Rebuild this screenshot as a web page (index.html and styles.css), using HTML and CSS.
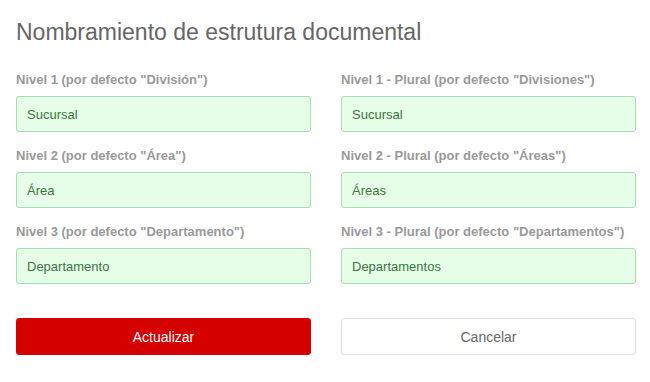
FILE: index.html
```html
<!DOCTYPE html>
<html lang="es">
<head>
  <meta charset="utf-8">
  <title>Nombramiento de estrutura documental</title>
  <link rel="stylesheet" href="styles.css">
</head>
<body>
  <div class="panel">
    <h2 class="title">Nombramiento de estrutura documental</h2>

    <form class="form-grid">
      <div class="field">
        <label>Nivel 1 (por defecto "División")</label>
        <input type="text" value="Sucursal">
      </div>
      <div class="field">
        <label>Nivel 1 - Plural (por defecto "Divisiones")</label>
        <input type="text" value="Sucursal">
      </div>
      <div class="field">
        <label>Nivel 2 (por defecto "Área")</label>
        <input type="text" value="Área">
      </div>
      <div class="field">
        <label>Nivel 2 - Plural (por defecto "Áreas")</label>
        <input type="text" value="Áreas">
      </div>
      <div class="field">
        <label>Nivel 3 (por defecto "Departamento")</label>
        <input type="text" value="Departamento">
      </div>
      <div class="field">
        <label>Nivel 3 - Plural (por defecto "Departamentos")</label>
        <input type="text" value="Departamentos">
      </div>

      <div class="actions">
        <button type="button" class="btn btn-red">Actualizar</button>
        <button type="button" class="btn btn-white">Cancelar</button>
      </div>
    </form>
  </div>
</body>
</html>
```

FILE: styles.css
```css
* {
  box-sizing: border-box;
}

body {
  margin: 0;
  background-color: #fff;
  font-family: "Liberation Sans", Arial, Helvetica, sans-serif;
}

.panel {
  padding: 16px 14px 0 16px;
}

/* Title */
.title {
  margin: 0 0 23px 0;
  font-size: 23px;
  font-weight: normal;
  line-height: 32px;
  color: #666;
}

/* Two columns of fields */
.form-grid {
  display: grid;
  grid-template-columns: 295px 295px;
  column-gap: 30px;
  row-gap: 15px;
}

.field label {
  display: block;
  margin-bottom: 8px;
  font-size: 13px;
  font-weight: bold;
  line-height: 17px;
  color: #999;
}

.field input {
  display: block;
  width: 100%;
  height: 36px;
  padding: 0 10px;
  border: 1px solid #a9dfb5;
  border-radius: 3px;
  background-color: #e6fde8;
  color: #3c763d;
  font-family: inherit;
  font-size: 13px;
}

/* Buttons */
.actions {
  grid-column: 1 / 3;
  display: grid;
  grid-template-columns: 295px 295px;
  column-gap: 30px;
  margin-top: 19px;
}

.btn {
  height: 37px;
  border-radius: 3px;
  font-family: inherit;
  font-size: 14px;
  cursor: pointer;
}

.btn-red {
  background-color: #d50000;
  border: 1px solid #d50000;
  color: #fff;
}

.btn-white {
  background-color: #fff;
  border: 1px solid #e0e0e0;
  color: #666;
}
```
